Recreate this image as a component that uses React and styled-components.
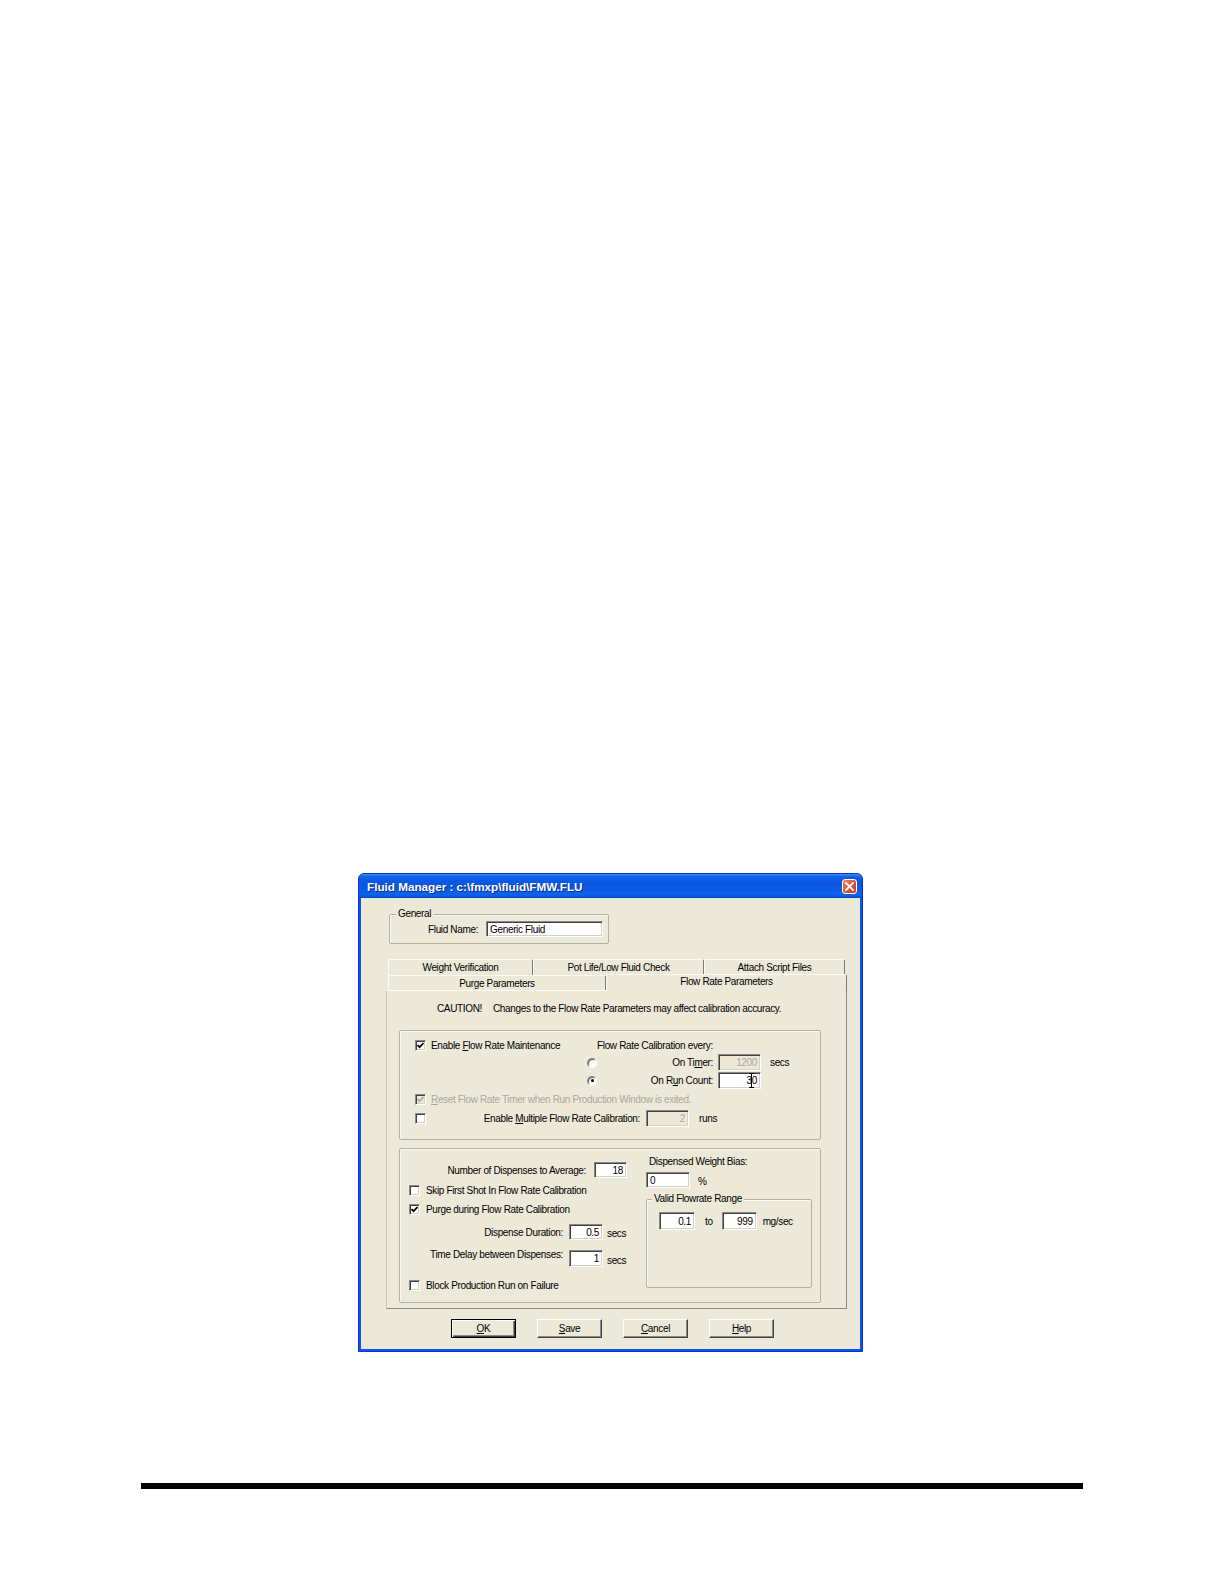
import styled, { createGlobalStyle, css } from "styled-components";

const GlobalStyle = createGlobalStyle`
  html, body {
    margin: 0;
    padding: 0;
    background: #ffffff;
  }
  body {
    font-family: "Liberation Sans", Arial, sans-serif;
  }
`;

const Page = styled.div`
  width: 1224px;
  min-height: 1584px;
  padding-top: 873px;
  box-sizing: border-box;
  background: #ffffff;
`;

const Window = styled.div`
  margin-left: 358px;
  width: 505px;
  box-sizing: border-box;
  background: #0b56e2;
  border: 1px solid #0831d9;
  border-radius: 6px 6px 0 0;
  overflow: hidden;
`;

const TitleBar = styled.div`
  height: 24px;
  display: flex;
  align-items: center;
  padding: 0 5px 0 8px;
  background: linear-gradient(
    to bottom,
    #3d8ff5 0%,
    #0f5fe6 12%,
    #0a56e0 45%,
    #0d63ee 85%,
    #0a55dc 94%,
    #0842c4 100%
  );
`;

const Title = styled.span`
  flex: 1;
  color: #ffffff;
  font: bold 11.7px "Liberation Sans", Arial, sans-serif;
  text-shadow: 1px 1px 0 #0b2a8a;
  white-space: nowrap;
`;

const CloseButton = styled.div`
  width: 15px;
  height: 15px;
  box-sizing: border-box;
  border: 1px solid #ffffff;
  border-radius: 3px;
  background: linear-gradient(135deg, #f08a6a 0%, #dc5a36 45%, #c0401c 100%);
  display: flex;
  align-items: center;
  justify-content: center;
`;

const Client = styled.div`
  margin: 0 2px 2px;
  height: 451px;
  background: #ece9d8;
  display: flex;
  flex-direction: column;
  font-size: 10px;
  letter-spacing: -0.35px;
  color: #000000;
`;

const GroupBox = styled.div`
  position: relative;
  box-sizing: border-box;
  flex: none;
  width: ${(p) => p.$w}px;
  height: ${(p) => p.$h}px;
  margin: ${(p) => p.$m || "0"};
  padding: ${(p) => p.$pad || "0"};
  border: 1px solid #b3b09f;
  border-radius: 2px;
  box-shadow: inset 1px 1px 0 #faf9f3;
  display: ${(p) => (p.$row ? "flex" : "block")};
`;

const GroupLabel = styled.span`
  position: absolute;
  top: -7px;
  left: ${(p) => p.$x}px;
  padding: 0 2px;
  line-height: 12px;
  background: #ece9d8;
`;

const Row = styled.div`
  display: flex;
  align-items: center;
  height: ${(p) => p.$h}px;
  margin-top: ${(p) => p.$mt || 0}px;
  padding-left: ${(p) => p.$pl || 0}px;
  white-space: nowrap;
`;

const FieldLabel = styled.span`
  flex: none;
  width: ${(p) => p.$w}px;
  text-align: right;
  margin-bottom: ${(p) => p.$up || 0}px;
`;

const Text = styled.span`
  margin-left: ${(p) => p.$ml || 0}px;
  margin-top: ${(p) => p.$down || 0}px;
  color: ${(p) => (p.$dim ? "#aca899" : "#000000")};
`;

const Field = styled.div`
  position: relative;
  flex: none;
  box-sizing: border-box;
  width: ${(p) => p.$w}px;
  height: ${(p) => p.$h || 17}px;
  margin-left: ${(p) => p.$ml || 0}px;
  padding: 0 3px;
  background: ${(p) => (p.$disabled ? "#ece9d8" : "#ffffff")};
  color: ${(p) => (p.$disabled ? "#aca899" : "#000000")};
  border: 1px solid;
  border-color: #8a8a8a #ffffff #ffffff #8a8a8a;
  box-shadow: inset 1px 1px 0 #404040, inset -1px -1px 0 #d4d0c8;
  display: flex;
  align-items: center;
  justify-content: ${(p) => (p.$left ? "flex-start" : "flex-end")};
`;

const Caret = styled.svg`
  position: absolute;
  right: 6px;
  top: 0px;
`;

const CheckItem = styled.label`
  flex: none;
  display: flex;
  align-items: center;
  box-sizing: border-box;
  width: ${(p) => (p.$w ? `${p.$w}px` : "auto")};
  padding-left: ${(p) => p.$pl || 0}px;
  gap: ${(p) => p.$gap || 5}px;
  color: ${(p) => (p.$disabled ? "#aca899" : "#000000")};
`;

const CheckBox = styled.span`
  flex: none;
  box-sizing: border-box;
  width: 11px;
  height: 11px;
  border: 1px solid;
  border-color: #8a8a8a #ffffff #ffffff #8a8a8a;
  box-shadow: inset 1px 1px 0 #404040, inset -1px -1px 0 #d4d0c8;
  background: ${(p) => (p.$disabled ? "#ece9d8" : "#ffffff")};
  color: ${(p) => (p.$disabled ? "#aca899" : "#000000")};
  display: flex;
  align-items: center;
  justify-content: center;
`;

const Radio = styled.span`
  flex: none;
  box-sizing: border-box;
  width: 10px;
  height: 10px;
  border-radius: 50%;
  border: 1px solid;
  border-color: #8a8a8a #ffffff #ffffff #8a8a8a;
  box-shadow: inset 1px 1px 0 #606060;
  background: #ffffff;
  display: flex;
  align-items: center;
  justify-content: center;

  &::after {
    content: "";
    width: 3px;
    height: 3px;
    border-radius: 50%;
    background: ${(p) => (p.$on ? "#000000" : "transparent")};
  }
`;

const TabArea = styled.div`
  margin: 15px 0 0 25px;
  width: 461px;
`;

const TabRow = styled.div`
  display: flex;
  height: ${(p) => p.$h}px;
  padding-left: 2px;
`;

const Tab = styled.div`
  box-sizing: border-box;
  flex: none;
  width: ${(p) => p.$w}px;
  display: flex;
  align-items: center;
  justify-content: center;
  background: #ece9d8;
  border: 1px solid #fbfaf4;
  border-right-color: #7d7b6d;
  border-bottom: none;
  border-radius: 2px 2px 0 0;
  white-space: nowrap;

  ${(p) =>
    p.$active &&
    css`
      position: relative;
      z-index: 1;
      height: 17px;
      margin-top: -1px;
      padding-bottom: 3px;
    `}
`;

const Panel = styled.div`
  box-sizing: border-box;
  height: 319px;
  padding: 10px 0 5px 12px;
  border: 1px solid;
  border-color: #fbfaf4 #8d8b7d #8d8b7d #c9c6b5;
  display: flex;
  flex-direction: column;
`;

const Caution = styled.div`
  display: flex;
  align-items: center;
  gap: 11px;
  height: 14px;
  margin-left: 38px;
  white-space: nowrap;
`;

const Column = styled.div`
  flex: none;
  width: ${(p) => (p.$w ? `${p.$w}px` : "auto")};
  padding-top: ${(p) => p.$pt || 0}px;
  display: flex;
  flex-direction: column;
`;

const ButtonBar = styled.div`
  display: flex;
  gap: 21px;
  height: 19px;
  margin-top: 10px;
  padding-left: 90px;
`;

const Button = styled.button`
  box-sizing: border-box;
  width: 65px;
  height: 19px;
  padding: 0;
  font: 10px "Liberation Sans", Arial, sans-serif;
  letter-spacing: -0.35px;
  color: #000000;
  background: #ece9d8;
  border: 1px solid;
  border-color: #ffffff #404040 #404040 #ffffff;
  box-shadow: inset -1px -1px 0 #8a8a8a;

  ${(p) =>
    p.$default &&
    css`
      border: 1px solid #000000;
      box-shadow: inset 1px 1px 0 #ffffff, inset -1px -1px 0 #404040,
        inset -2px -2px 0 #8a8a8a;
    `}
`;

const Rule = styled.div`
  margin: 131px 0 0 141px;
  width: 942px;
  height: 6px;
  background: #000000;
`;

function Check({ checked, disabled }) {
  return (
    <CheckBox $disabled={disabled}>
      {checked && (
        <svg width="7" height="7" viewBox="0 0 7 7">
          <polyline points="0.5,3 2.6,5.2 6.5,1" fill="none" stroke="currentColor" strokeWidth="1.7" />
        </svg>
      )}
    </CheckBox>
  );
}

export default function App() {
  return (
    <>
      <GlobalStyle />
      <Page>
        <Window>
          <TitleBar>
            <Title>Fluid Manager : c:\fmxp\fluid\FMW.FLU</Title>
            <CloseButton>
              <svg width="9" height="9" viewBox="0 0 9 9">
                <path d="M1 1 L8 8 M8 1 L1 8" stroke="#ffffff" strokeWidth="1.8" strokeLinecap="round" />
              </svg>
            </CloseButton>
          </TitleBar>

          <Client>
            <GroupBox $w={220} $h={30} $m="16px 0 0 28px" $pad="6px 0 0 38px">
              <GroupLabel $x={6}>General</GroupLabel>
              <Row $h={16}>
                <Text>Fluid Name:</Text>
                <Field $w={117} $h={16} $ml={8} $left>Generic Fluid</Field>
              </Row>
            </GroupBox>

            <TabArea>
              <TabRow $h={16}>
                <Tab $w={145}>Weight Verification</Tab>
                <Tab $w={171}>Pot Life/Low Fluid Check</Tab>
                <Tab $w={141}>Attach Script Files</Tab>
              </TabRow>
              <TabRow $h={15}>
                <Tab $w={218}>Purge Parameters</Tab>
                <Tab $w={241} $active>Flow Rate Parameters</Tab>
              </TabRow>

              <Panel>
                <Caution>
                  <span>CAUTION!</span>
                  <span>Changes to the Flow Rate Parameters may affect calibration accuracy.</span>
                </Caution>

                <GroupBox $w={422} $h={110} $m="15px 0 0 0" $pad="6px 0 0 0">
                  <Row $h={17}>
                    <CheckItem $w={197} $pl={15}>
                      <Check checked />
                      <span>
                        Enable <u>F</u>low Rate Maintenance
                      </span>
                    </CheckItem>
                    <Text>Flow Rate Calibration every:</Text>
                  </Row>
                  <Row $h={17} $pl={187}>
                    <Radio />
                    <FieldLabel $w={116}>
                      On Ti<u>m</u>er:
                    </FieldLabel>
                    <Field $w={43} $ml={5} $disabled>1200</Field>
                    <Text $ml={9}>secs</Text>
                  </Row>
                  <Row $h={19} $pl={187}>
                    <Radio $on />
                    <FieldLabel $w={116}>
                      On R<u>u</u>n Count:
                    </FieldLabel>
                    <Field $w={43} $ml={5}>
                      30
                      <Caret width="5" height="15" viewBox="0 0 5 15">
                        <path d="M0 0.5 H5 M2.5 0.5 V14.5 M0 14.5 H5" stroke="#000" strokeWidth="1" fill="none" />
                      </Caret>
                    </Field>
                  </Row>
                  <Row $h={19}>
                    <CheckItem $pl={15} $disabled>
                      <Check checked disabled />
                      <span>
                        <u>R</u>eset Flow Rate Timer when Run Production Window is exited.
                      </span>
                    </CheckItem>
                  </Row>
                  <Row $h={19} $pl={15}>
                    <Check />
                    <FieldLabel $w={214}>
                      Enable <u>M</u>ultiple Flow Rate Calibration:
                    </FieldLabel>
                    <Field $w={43} $ml={6} $disabled>2</Field>
                    <Text $ml={10}>runs</Text>
                  </Row>
                </GroupBox>

                <GroupBox $w={422} $h={155} $m="8px 0 0 0" $row>
                  <Column $w={246} $pt={12}>
                    <Row $h={18}>
                      <FieldLabel $w={186}>Number of Dispenses to Average:</FieldLabel>
                      <Field $w={33} $h={16} $ml={8}>18</Field>
                    </Row>
                    <Row $h={20} $mt={1}>
                      <CheckItem $pl={9} $gap={6}>
                        <Check />
                        <span>Skip First Shot In Flow Rate Calibration</span>
                      </CheckItem>
                    </Row>
                    <Row $h={18}>
                      <CheckItem $pl={9} $gap={6}>
                        <Check checked />
                        <span>Purge during Flow Rate Calibration</span>
                      </CheckItem>
                    </Row>
                    <Row $h={20} $mt={4}>
                      <FieldLabel $w={163}>Dispense Duration:</FieldLabel>
                      <Field $w={34} $h={16} $ml={6}>0.5</Field>
                      <Text $ml={4} $down={2}>secs</Text>
                    </Row>
                    <Row $h={20} $mt={6}>
                      <FieldLabel $w={163} $up={8}>Time Delay between Dispenses:</FieldLabel>
                      <Field $w={34} $h={17} $ml={6}>1</Field>
                      <Text $ml={4} $down={4}>secs</Text>
                    </Row>
                    <Row $h={18} $mt={8}>
                      <CheckItem $pl={9} $gap={6}>
                        <Check />
                        <span>Block Production Run on Failure</span>
                      </CheckItem>
                    </Row>
                  </Column>

                  <Column $pt={5}>
                    <Row $h={14} $pl={3}>
                      <Text>Dispensed Weight Bias:</Text>
                    </Row>
                    <Row $h={18} $mt={3}>
                      <Field $w={44} $h={16} $left>0</Field>
                      <Text $ml={8} $down={2}>%</Text>
                    </Row>
                    <GroupBox $w={166} $h={89} $m="10px 0 0 0" $pad="12px 0 0 12px">
                      <GroupLabel $x={5}>Valid Flowrate Range</GroupLabel>
                      <Row $h={18}>
                        <Field $w={36} $h={18}>0.1</Field>
                        <Text $ml={10}>to</Text>
                        <Field $w={35} $h={18} $ml={9}>999</Field>
                        <Text $ml={6}>mg/sec</Text>
                      </Row>
                    </GroupBox>
                  </Column>
                </GroupBox>
              </Panel>
            </TabArea>

            <ButtonBar>
              <Button $default>
                <u>O</u>K
              </Button>
              <Button>
                <u>S</u>ave
              </Button>
              <Button>
                <u>C</u>ancel
              </Button>
              <Button>
                <u>H</u>elp
              </Button>
            </ButtonBar>
          </Client>
        </Window>
        <Rule />
      </Page>
    </>
  );
}
